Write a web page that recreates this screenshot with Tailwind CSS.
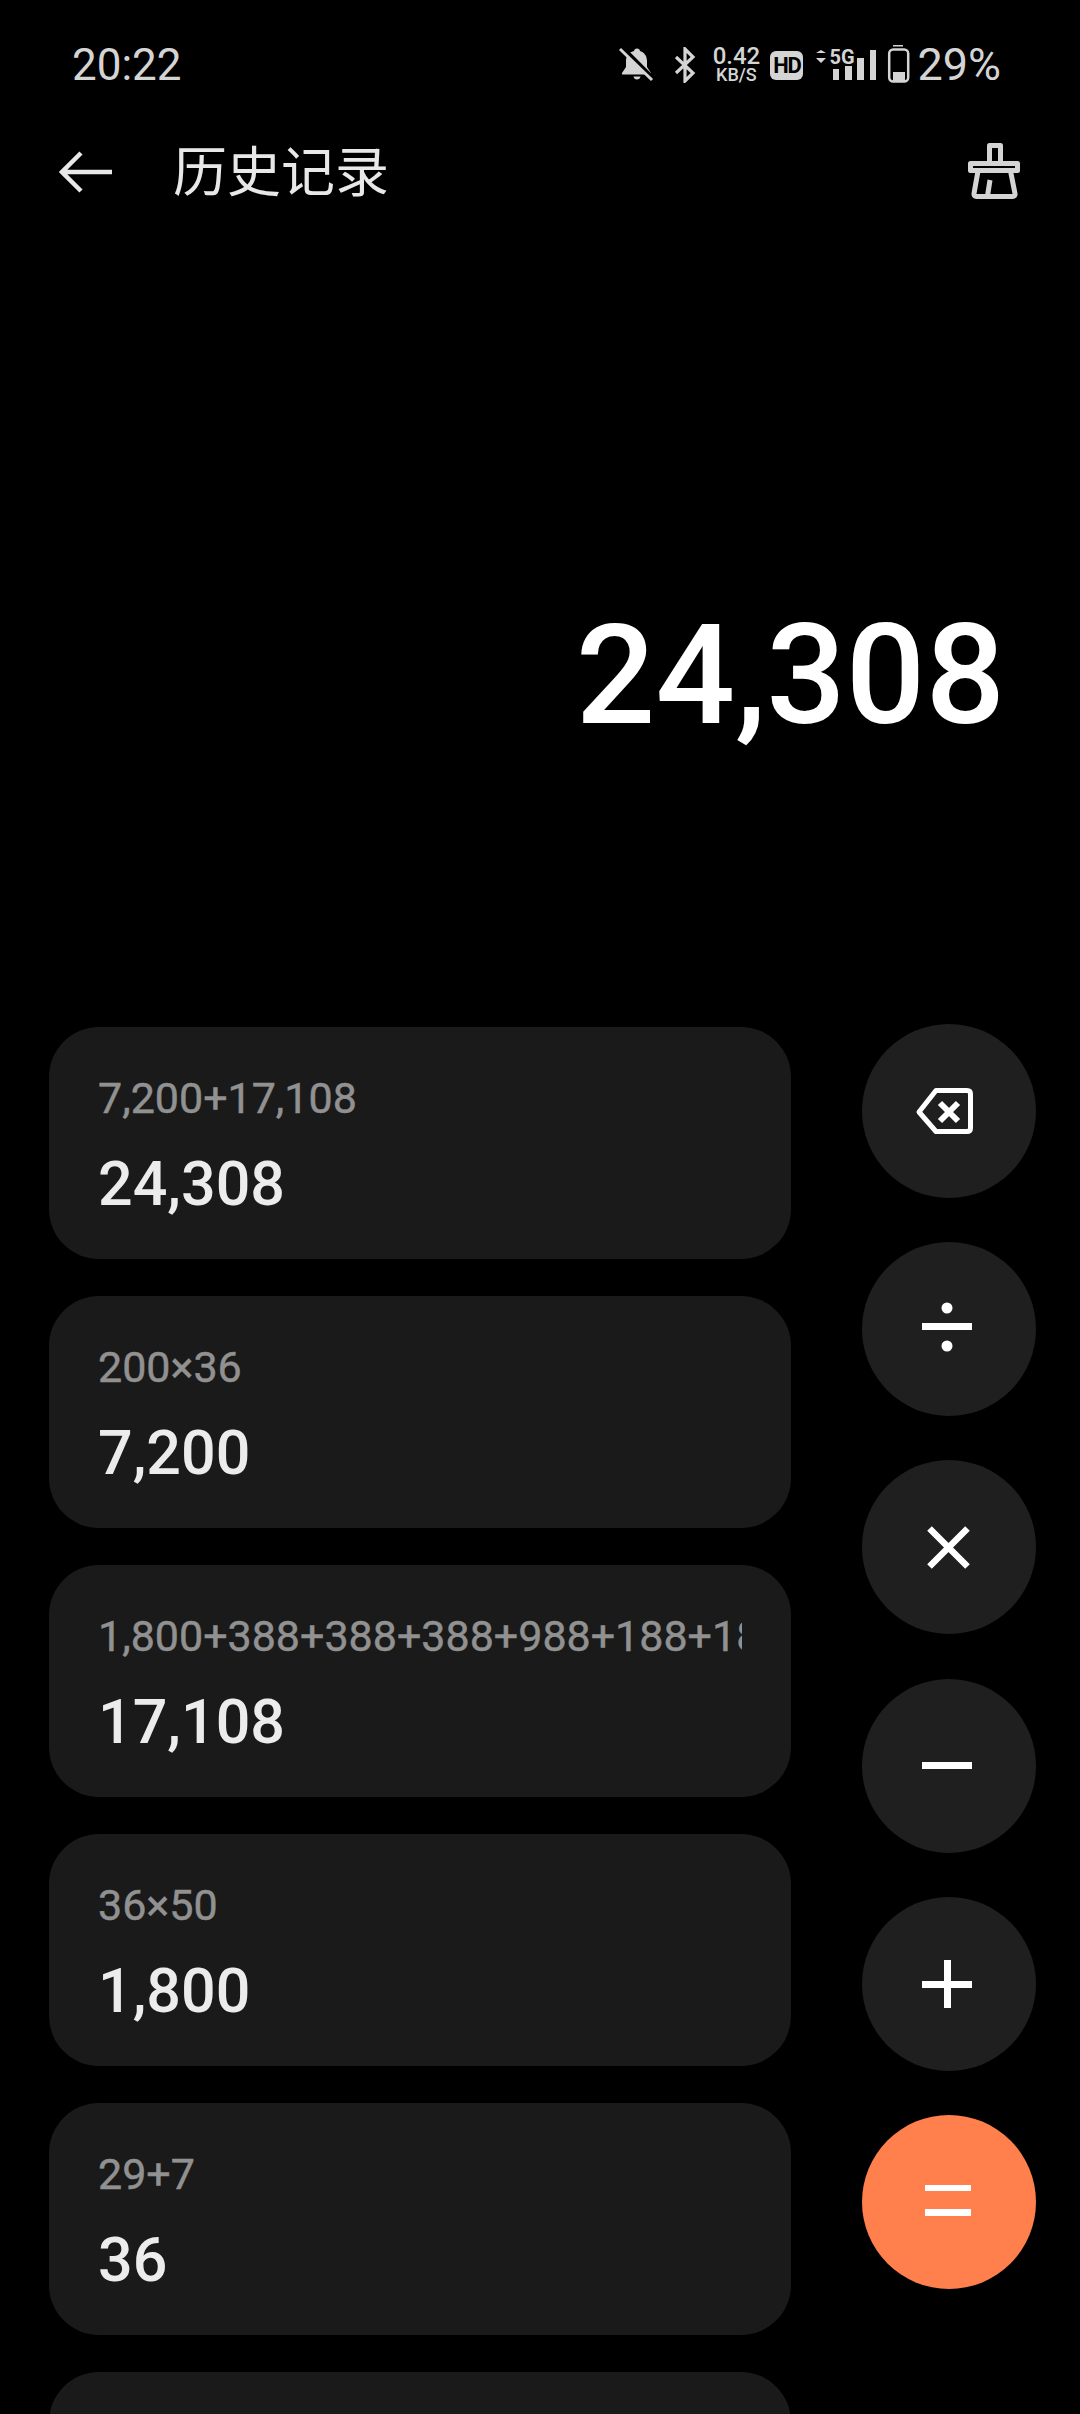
<!DOCTYPE html>
<html lang="zh">

<head>
    <meta charset="UTF-8">
    <meta name="viewport" content="width=device-width, initial-scale=1.0">
    <title>历史记录</title>
    <script src="https://cdn.jsdelivr.net/npm/@tailwindcss/browser@4"></script>
</head>

<body class="bg-black h-[2414px] overflow-hidden font-['Roboto',sans-serif]">
    <!-- Status bar -->
    <div class="h-[130px] flex items-center justify-between pl-[72px] pr-[79px] text-[#d4d4d4]">
        <span class="text-[44px] leading-[50px]">20:22</span>
        <div class="flex items-center">
            <svg class="w-[36px] h-[36px]" viewBox="0 0 36 36">
                <path d="M19 1.500c1.800 0 2.800 1 3 2.600 4.800 1.500 7 5.500 7 10.400v5.500l4 6v1.500H4v-1.500l4-6v-5.500c0-4.900 2.200-8.900 8-10.400.200-1.600 1.200-2.600 3-2.600z" fill="#d4d4d4" />
                <path d="M15.500 29.500h7c-.300 2-1.700 3-3.500 3s-3.200-1-3.500-3z" fill="#d4d4d4" />
                <path d="M4 0 36 32" stroke="#000" stroke-width="4" />
                <path d="M2 2 34 33" stroke="#d4d4d4" stroke-width="3" />
            </svg>
            <svg class="w-[24px] h-[36px] ml-[19px]" viewBox="0 0 24 36">
                <path d="M3 10 20 26 12 34V2l8 8L3 26" fill="none" stroke="#d4d4d4" stroke-width="3.200" />
            </svg>
            <div class="w-[50px] ml-[14px] flex flex-col items-center font-medium">
                <span class="text-[24px] leading-[19px]">0.42</span>
                <span class="text-[18px] leading-[17px]">KB/S</span>
            </div>
            <div class="w-[33px] h-[29px] ml-[9px] rounded-[6px] bg-[#d4d4d4] text-black text-[22px] leading-[29px] font-bold text-center tracking-tighter">HD</div>
            <svg class="w-[64px] h-[40px] ml-[11px]" viewBox="0 -2 64 40">
                <path d="M2 6h10L7 3zM2 11h10l-5 5z" fill="#d4d4d4" />
                <text x="15.500" y="16.500" font-family="Roboto" font-size="20" font-weight="700" fill="#d4d4d4">5G</text>
                <path d="M19 22h6v11h-6zM31 19h7v14h-7zM43 11h7v22h-7zM56 3h6v30h-6z" fill="#d4d4d4" />
            </svg>
            <svg class="w-[26px] h-[42px] ml-[8px]" viewBox="0 0 26 42">
                <path d="M7 1h10v1.500H7z" fill="#d4d4d4" />
                <rect x="3.200" y="5.500" width="19" height="32" rx="4" fill="none" stroke="#d4d4d4" stroke-width="2.500" />
                <path d="M7 28h12v9H7z" fill="#d4d4d4" />
            </svg>
            <span class="ml-[5px] text-[45px] leading-[50px]">29%</span>
        </div>
    </div>

    <!-- Title bar -->
    <div class="h-[84px] flex items-center justify-between pl-[59px] pr-[56px]">
        <div class="flex items-center">
            <svg class="w-[54px] h-[42px]" viewBox="0 0 54 42">
                <path d="M53 21H3M22 2 3 21l19 19" fill="none" stroke="#e8e8e8" stroke-width="4.500" />
            </svg>
            <span class="ml-[60px] pb-[6px] text-[#e8e8e8] text-[54px] leading-[70px] font-['Noto_Sans_CJK_SC',sans-serif]">历史记录</span>
        </div>
        <svg class="w-[60px] h-[64px]" viewBox="0 0 60 64">
            <g fill="none" stroke="#d4d4d4" stroke-width="5" stroke-linejoin="round">
                <path d="M25.500 23V5.500h11V23" />
                <path d="M6.500 23.500h47v7h-47z" />
                <path d="M14 31l-4 22.500q-.500 3 2.500 3h36q3 0 2.500-3L46.500 31" />
                <path d="M26 40l-2.500 16" />
            </g>
        </svg>
    </div>

    <!-- Result -->
    <div class="pt-[381px] pb-[269px] pr-[75px] text-right text-white text-[140px] leading-[160px] font-medium">24,308</div>

    <div class="h-[1390px] overflow-hidden flex items-start pl-[49px]">
        <!-- History list -->
        <div class="w-[742px] flex flex-col gap-[37px] pt-[3px]">
            <div class="h-[232px] rounded-[50px] bg-[#1a1a1a] pt-[46px] pl-[49px]">
                <div class="w-[644px] overflow-hidden whitespace-nowrap text-[#919191] text-[43px] leading-[50px] [-webkit-text-stroke:0.5px_#919191]">7,200+17,108</div>
                <div class="mt-[26px] text-[#ececec] text-[61px] leading-[70px] font-medium">24,308</div>
            </div>
            <div class="h-[232px] rounded-[50px] bg-[#1a1a1a] pt-[46px] pl-[49px]">
                <div class="w-[644px] overflow-hidden whitespace-nowrap text-[#919191] text-[43px] leading-[50px] [-webkit-text-stroke:0.5px_#919191]">200×36</div>
                <div class="mt-[26px] text-[#ececec] text-[61px] leading-[70px] font-medium">7,200</div>
            </div>
            <div class="h-[232px] rounded-[50px] bg-[#1a1a1a] pt-[46px] pl-[49px]">
                <div class="w-[644px] overflow-hidden whitespace-nowrap text-[#919191] text-[43px] leading-[50px] [-webkit-text-stroke:0.5px_#919191]">1,800+388+388+388+988+188+18</div>
                <div class="mt-[26px] text-[#ececec] text-[61px] leading-[70px] font-medium">17,108</div>
            </div>
            <div class="h-[232px] rounded-[50px] bg-[#1a1a1a] pt-[46px] pl-[49px]">
                <div class="w-[644px] overflow-hidden whitespace-nowrap text-[#919191] text-[43px] leading-[50px] [-webkit-text-stroke:0.5px_#919191]">36×50</div>
                <div class="mt-[26px] text-[#ececec] text-[61px] leading-[70px] font-medium">1,800</div>
            </div>
            <div class="h-[232px] rounded-[50px] bg-[#1a1a1a] pt-[46px] pl-[49px]">
                <div class="w-[644px] overflow-hidden whitespace-nowrap text-[#919191] text-[43px] leading-[50px] [-webkit-text-stroke:0.5px_#919191]">29+7</div>
                <div class="mt-[26px] text-[#ececec] text-[61px] leading-[70px] font-medium">36</div>
            </div>
            <div class="h-[232px] rounded-[50px] bg-[#1a1a1a]"></div>
        </div>

        <!-- Operator buttons -->
        <div class="ml-[71px] flex flex-col gap-[44.200px]">
            <div class="w-[174px] h-[174px] rounded-full bg-[#1f1f1f]">
                <svg class="w-full h-full" viewBox="0 0 174 174">
                    <path d="M57 88 74 66.500h31q3.500 0 3.500 3.500v34q0 3.500-3.500 3.500H74z" fill="none" stroke="#fff" stroke-width="5" stroke-linejoin="round" />
                    <path d="M78 79l18 18M96 79 78 97" fill="none" stroke="#fff" stroke-width="6" />
                </svg>
            </div>
            <div class="w-[174px] h-[174px] rounded-full bg-[#1f1f1f]">
                <svg class="w-full h-full" viewBox="0 0 174 174" fill="#fff">
                    <path d="M60 81h50v7H60z" />
                    <circle cx="85" cy="66" r="5.500" />
                    <circle cx="85" cy="104" r="5.500" />
                </svg>
            </div>
            <div class="w-[174px] h-[174px] rounded-full bg-[#1f1f1f]">
                <svg class="w-full h-full" viewBox="0 0 174 174">
                    <path d="M67.500 68.500l38 38M105.500 68.500l-38 38" fill="none" stroke="#fff" stroke-width="6.500" />
                </svg>
            </div>
            <div class="w-[174px] h-[174px] rounded-full bg-[#1f1f1f]">
                <svg class="w-full h-full" viewBox="0 0 174 174" fill="#fff">
                    <path d="M60 83h50v7H60z" />
                </svg>
            </div>
            <div class="w-[174px] h-[174px] rounded-full bg-[#1f1f1f]">
                <svg class="w-full h-full" viewBox="0 0 174 174" fill="#fff">
                    <path d="M60 84h50v7H60zM82 63h7v48h-7z" />
                </svg>
            </div>
            <div class="w-[174px] h-[174px] rounded-full bg-[#ff7f4d]">
                <svg class="w-full h-full" viewBox="0 0 174 174" fill="#fff">
                    <path d="M63 70h46v6H63zM63 94h46v7H63z" />
                </svg>
            </div>
        </div>
    </div>
</body>

</html>
